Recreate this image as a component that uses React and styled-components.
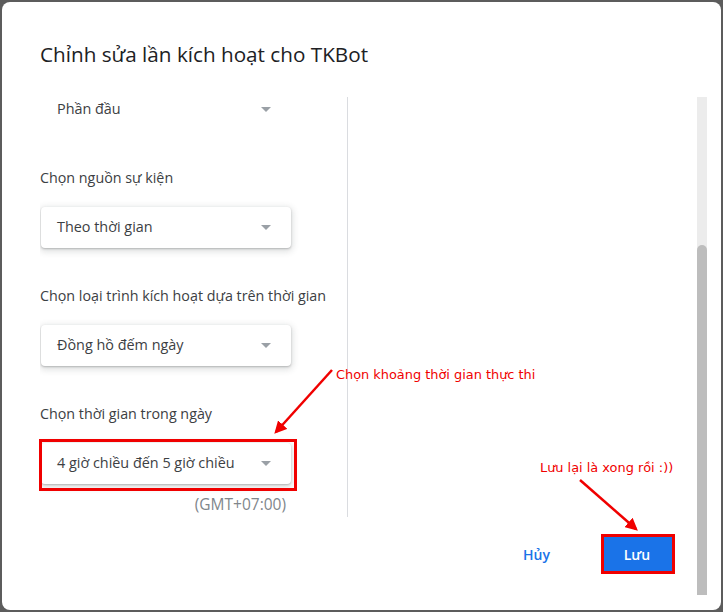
import React from 'react';
import styled, { createGlobalStyle } from 'styled-components';

const GlobalStyle = createGlobalStyle`
    html, body {
        margin: 0;
        padding: 0;
        background: #5c5c5c;
    }
    body {
        font-family: "Open Sans", Roboto, "Noto Sans", sans-serif;
    }
`;

const fields = [
    { label: 'Chọn nguồn sự kiện', value: 'Theo thời gian' },
    { label: 'Chọn loại trình kích hoạt dựa trên thời gian', value: 'Đồng hồ đếm ngày' },
    { label: 'Chọn thời gian trong ngày', value: '4 giờ chiều đến 5 giờ chiều' },
];

const App = () => {
    return (
        <>
            <GlobalStyle />
            <Page>
                <Dialog>
                    <Main>
                        <Title>Chỉnh sửa lần kích hoạt cho TKBot</Title>
                        <Body>
                            <LeftColumn>
                                <Select flat>
                                    <span>Phần đầu</span>
                                    <Caret />
                                </Select>
                                {fields.map(field => {
                                    return (
                                        <React.Fragment key={field.label}>
                                            <Label>{field.label}</Label>
                                            <Select>
                                                <span>{field.value}</span>
                                                <Caret />
                                            </Select>
                                        </React.Fragment>
                                    )
                                })}
                                <Hint>(GMT+07:00)</Hint>
                            </LeftColumn>
                            <Divider />
                        </Body>
                        <Footer>
                            <TextButton>Hủy</TextButton>
                            <PrimaryButton>Lưu</PrimaryButton>
                        </Footer>
                    </Main>
                    <ScrollRail>
                        <ScrollThumb />
                    </ScrollRail>
                </Dialog>

                <Overlay>
                    <svg width="723" height="612" viewBox="0 0 723 612">
                        <defs>
                            <marker id="head" markerWidth="5" markerHeight="5" refX="4" refY="2.5" orient="auto">
                                <path d="M0,0 L5,2.5 L0,5 Z" fill="#f00000" />
                            </marker>
                        </defs>
                        <line x1="332" y1="370" x2="276" y2="432" stroke="#f00000" strokeWidth="2.5" markerEnd="url(#head)" />
                        <line x1="580" y1="480" x2="636" y2="529" stroke="#f00000" strokeWidth="2.5" markerEnd="url(#head)" />
                    </svg>
                    <Note left={336} top={366}>Chọn khoảng thời gian thực thi</Note>
                    <Note left={540} top={459}>Lưu lại là xong rồi :))</Note>
                    <Frame left={39} top={439} width={258} height={52} />
                    <Frame left={601} top={534} width={74} height={40} />
                </Overlay>
            </Page>
        </>
    )
}

const Page = styled.div`
    position: relative;
    width: 723px;
    height: 612px;
    padding: 2px;
    box-sizing: border-box;
`;

const Dialog = styled.div`
    width: 719px;
    height: 608px;
    background: #fff;
    border-radius: 8px;
    display: flex;
    overflow: hidden;
`;

const Main = styled.div`
    flex: 1;
    display: flex;
    flex-direction: column;
    padding: 38px 24px 0 38px;
`;

const Title = styled.h2`
    margin: 0;
    font-size: 20.7px;
    line-height: 28px;
    font-weight: 400;
    color: #202124;
`;

const Body = styled.div`
    display: flex;
    height: 428px;
    margin-top: 21px;
    overflow: hidden;
`;

const LeftColumn = styled.div`
    width: 307px;
    display: flex;
    flex-direction: column;
    align-items: flex-start;
`;

const Label = styled.div`
    margin-top: 38px;
    font-size: 14.3px;
    line-height: 20px;
    color: #3c4043;
`;

const Select = styled.div`
    margin: ${props => props.flat ? '0' : '19px'} 0 0 1px;
    width: 250px;
    height: 41px;
    box-sizing: border-box;
    padding: 0 20px 2px 16px;
    display: flex;
    align-items: center;
    justify-content: space-between;
    border-radius: 4px;
    background: #fff;
    font-size: 14.4px;
    color: #3c4043;
    box-shadow: ${props => props.flat ? 'none' : '0 1px 2px rgba(60,64,67,0.3), 0 2px 6px 2px rgba(60,64,67,0.15)'};
`;

const Caret = styled.span`
    width: 0;
    height: 0;
    margin-top: 2px;
    border-left: 5px solid transparent;
    border-right: 5px solid transparent;
    border-top: 5px solid #9aa0a6;
`;

const Hint = styled.div`
    width: 246px;
    margin-top: 10px;
    text-align: right;
    font-size: 15.5px;
    line-height: 20px;
    color: #80868b;
`;

const Divider = styled.div`
    width: 1px;
    margin-top: 8px;
    background: #dadce0;
`;

const Footer = styled.div`
    display: flex;
    justify-content: flex-end;
    align-items: center;
    gap: 27px;
    margin-top: 19px;
`;

const TextButton = styled.button`
    height: 36px;
    padding: 0 24px;
    border: none;
    background: transparent;
    font-family: inherit;
    font-size: 14px;
    font-weight: 600;
    color: #1a73e8;
`;

const PrimaryButton = styled(TextButton)`
    width: 72px;
    padding: 0;
    border-radius: 4px;
    background: #1a73e8;
    color: #fff;
`;

const ScrollRail = styled.div`
    width: 10px;
    margin: 95px 14px 15px 0;
    background: #ececec;
    display: flex;
    flex-direction: column;
    justify-content: flex-end;
`;

const ScrollThumb = styled.div`
    height: 350px;
    background: #bdbdbd;
    border-radius: 5px 5px 0 0;
`;

const Overlay = styled.div`
    position: absolute;
    inset: 0;
    pointer-events: none;
    svg {
        position: absolute;
        top: 0;
        left: 0;
    }
`;

const Note = styled.div`
    position: absolute;
    left: ${props => props.left}px;
    top: ${props => props.top}px;
    font-family: "DejaVu Sans", Verdana, sans-serif;
    font-size: 12.9px;
    line-height: 18px;
    color: #f00000;
    white-space: nowrap;
`;

const Frame = styled.div`
    position: absolute;
    left: ${props => props.left}px;
    top: ${props => props.top}px;
    width: ${props => props.width}px;
    height: ${props => props.height}px;
    box-sizing: border-box;
    border: 3px solid #f00000;
`;

export default App;
